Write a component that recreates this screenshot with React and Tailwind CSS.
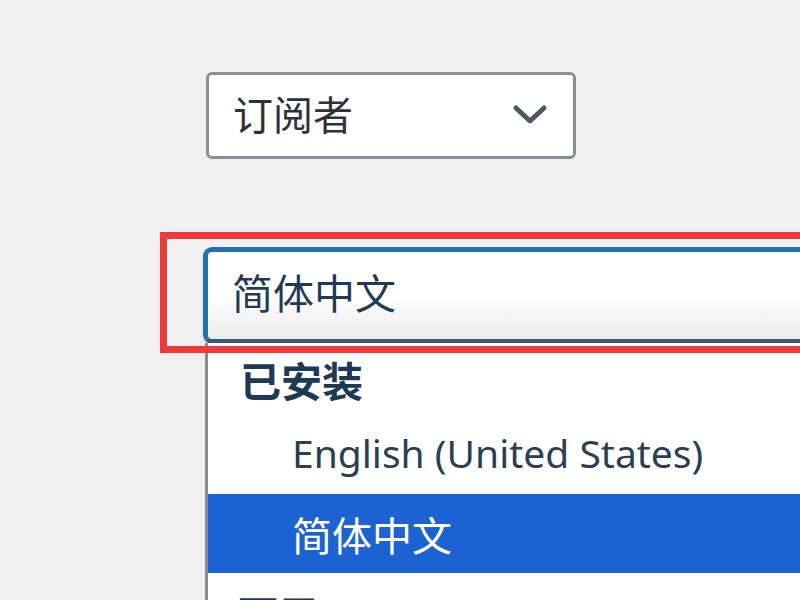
import React from "react";

const cjk = { fontFamily: '"Noto Sans CJK SC", "Noto Sans", sans-serif' };
const latin = { fontFamily: '"Noto Sans", "Noto Sans CJK SC", sans-serif' };

const Chevron = () => (
  <svg width="38" height="24" viewBox="0 0 38 24" fill="none">
    <path d="M5 5 L19 18 L33 5" stroke="#50575e" strokeWidth="5" strokeLinecap="round" strokeLinejoin="round" />
  </svg>
);

const RoleSelect = () => (
  <div className="ml-[206px] w-[370px] h-[87px] flex items-center justify-between pl-[24px] pr-[24px] pb-[6px] bg-white border-[3px] border-[#8c8f94] rounded-[6px]">
    <span className="text-[40px] leading-none text-[#2c3338]" style={cjk}>订阅者</span>
    <span className="pt-[4px]"><Chevron /></span>
  </div>
);

const LanguageSelect = () => (
  <div className="relative mt-[88px]">
    <div className="ml-[203px] h-[97px] flex items-center pl-[24px] pb-[8px] border-[5px] border-[#2271b1] border-b-[#3b5976] border-r-0 rounded-l-[9px] bg-gradient-to-b from-white via-white to-[#ebebeb]">
      <span className="text-[41px] leading-none text-[#1f3b55]" style={cjk}>简体中文</span>
    </div>

    {/* open options list */}
    <div className="absolute left-[205px] right-0 top-[96px] h-[300px] bg-white border-l-[3px] border-[#8a8a8a]">
      <div className="h-[74px] flex items-end pb-[17px] pl-[32px]">
        <span className="text-[41px] leading-none font-bold text-[#1d3a55]" style={cjk}>已安装</span>
      </div>
      <div className="h-[77px] flex items-center pl-[84px] pb-[6px]">
        <span className="text-[39px] leading-none text-[#2c3f50]" style={latin}>English (United States)</span>
      </div>
      <div className="h-[79px] flex items-center pl-[84px] bg-[#1d62d3]">
        <span className="text-[40px] leading-none text-white" style={cjk}>简体中文</span>
      </div>
      <div className="h-[70px] flex items-start pt-[20px] pl-[30px]">
        <span className="text-[40px] leading-none font-bold text-[#1d3a55]" style={cjk}>可用</span>
      </div>
    </div>

    {/* highlight annotation */}
    <div className="absolute left-[160px] -right-[20px] -top-[15px] h-[121px] border-[7px] border-[#ef3a3a] pointer-events-none" />
  </div>
);

export default function App() {
  return (
    <div className="w-[800px] h-[600px] overflow-hidden bg-[#f0f0f1] pt-[72px]">
      <RoleSelect />
      <LanguageSelect />
    </div>
  );
}
